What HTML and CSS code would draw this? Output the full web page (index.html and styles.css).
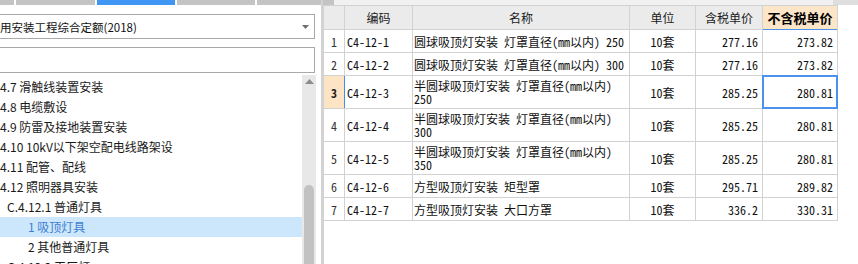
FILE: index.html
```
<!DOCTYPE html>
<html lang="zh">
<head>
<meta charset="utf-8">
<link rel="stylesheet" href="styles.css">
</head>
<body>
<div class="app">
  <div class="left">
    <div class="tabs">
      <span class="tab w14"></span>
      <span class="tab w79"></span>
      <span class="tab w78 active"></span>
      <span class="tab w78"></span>
      <span class="tab grow"></span>
    </div>
    <div class="combo">
      <span class="combo-text">用安装工程综合定额(2018)</span>
      <svg class="combo-arrow" width="7" height="4" viewBox="0 0 7 4"><path d="M0 0H7L3.5 4Z" fill="#707070"/></svg>
    </div>
    <div class="search"></div>
    <div class="tree">
      <div class="tree-items">
        <div class="item l2">4.7 滑触线装置安装</div>
        <div class="item l2">4.8 电缆敷设</div>
        <div class="item l2">4.9 防雷及接地装置安装</div>
        <div class="item l2">4.10 10kV以下架空配电线路架设</div>
        <div class="item l2">4.11 配管、配线</div>
        <div class="item l2">4.12 照明器具安装</div>
        <div class="item l3">C.4.12.1 普通灯具</div>
        <div class="item l4 selected">1 吸顶灯具</div>
        <div class="item l4">2 其他普通灯具</div>
        <div class="item l3">C.4.12.2 工厂灯</div>
      </div>
      <div class="vscroll">
        <div class="vs-up"><svg width="9" height="5" viewBox="0 0 9 5"><path d="M0 5L4.5 0L9 5Z" fill="#8c8c8c"/></svg></div>
        <div class="thumb"></div>
      </div>
    </div>
  </div>
  <div class="splitter"></div>
  <div class="right">
    <div class="strip"><span class="stub"></span><span class="fill"></span><span class="end"></span></div>
    <div class="body">
      <div class="grid">
        <div class="hd"></div>
        <div class="hd">编码</div>
        <div class="hd">名称</div>
        <div class="hd">单位</div>
        <div class="hd">含税单价</div>
        <div class="hd hd-cur">不含税单价</div>

        <div class="c num">1</div>
        <div class="c code">C4-12-1</div>
        <div class="c name">圆球吸顶灯安装 灯罩直径(mm以内) 250</div>
        <div class="c unit">10套</div>
        <div class="c price">277.16</div>
        <div class="c price">273.82</div>

        <div class="c num">2</div>
        <div class="c code">C4-12-2</div>
        <div class="c name">圆球吸顶灯安装 灯罩直径(mm以内) 300</div>
        <div class="c unit">10套</div>
        <div class="c price">277.16</div>
        <div class="c price">273.82</div>

        <div class="c num num-cur">3</div>
        <div class="c code code-cur">C4-12-3</div>
        <div class="c name">半圆球吸顶灯安装 灯罩直径(mm以内) 250</div>
        <div class="c unit">10套</div>
        <div class="c price">285.25</div>
        <div class="c price sel">280.81</div>

        <div class="c num">4</div>
        <div class="c code">C4-12-4</div>
        <div class="c name">半圆球吸顶灯安装 灯罩直径(mm以内) 300</div>
        <div class="c unit">10套</div>
        <div class="c price">285.25</div>
        <div class="c price">280.81</div>

        <div class="c num">5</div>
        <div class="c code">C4-12-5</div>
        <div class="c name">半圆球吸顶灯安装 灯罩直径(mm以内) 350</div>
        <div class="c unit">10套</div>
        <div class="c price">285.25</div>
        <div class="c price">280.81</div>

        <div class="c num">6</div>
        <div class="c code">C4-12-6</div>
        <div class="c name">方型吸顶灯安装 矩型罩</div>
        <div class="c unit">10套</div>
        <div class="c price">295.71</div>
        <div class="c price">289.82</div>

        <div class="c num">7</div>
        <div class="c code">C4-12-7</div>
        <div class="c name">方型吸顶灯安装 大口方罩</div>
        <div class="c unit">10套</div>
        <div class="c price">336.2</div>
        <div class="c price">330.31</div>
      </div>
    </div>
  </div>
</div>
</body>
</html>
```
FILE: styles.css
```
html, body {
  margin: 0;
  padding: 0;
  background: #ffffff;
}
body {
  width: 858px;
  height: 264px;
  overflow: hidden;
  font-family: "Noto Sans CJK SC", "Noto Sans", sans-serif;
  color: #1a1a1a;
}
.app {
  display: flex;
  height: 264px;
}
.left {
  width: 321px;
  flex: none;
  overflow: hidden;
  display: flex;
  flex-direction: column;
}
.tabs {
  display: flex;
  gap: 2px;
  height: 5px;
  flex: none;
}
.tab { background: #c4c4c4; height: 5px; }
.tab.active { background: #4096f3; }
.w14 { width: 14px; }
.w79 { width: 79px; }
.w78 { width: 78px; }
.grow { flex: 1; }

.combo {
  margin: 9px 6px 0 -30px;
  height: 25px;
  box-sizing: border-box;
  border: 1px solid #a9a9a9;
  display: flex;
  align-items: center;
  padding-left: 29px;
  padding-right: 5px;
  flex: none;
}
.combo-text {
  flex: 1;
  font-size: 11.5px;
  white-space: nowrap;
  color: #111;
}
.combo-arrow { flex: none; }

.search {
  margin: 8px 6px 0 -30px;
  height: 26px;
  box-sizing: border-box;
  border: 1px solid #a9a9a9;
  flex: none;
}
.tree {
  margin-top: 2px;
  flex: 1;
  display: flex;
  min-height: 0;
}
.tree-items {
  flex: 1;
  padding-top: 2px;
  overflow: hidden;
}
.item {
  height: 20px;
  line-height: 20px;
  font-size: 12px;
  white-space: nowrap;
  color: #1a1a1a;
}
.l2 { padding-left: 0; }
.l3 { padding-left: 7px; }
.l4 { padding-left: 28px; }
.item.selected {
  background: #cce7fc;
  color: #3f7fd0;
}
.vscroll {
  width: 14px;
  margin-right: 5px;
  background: #e8e8e8;
  display: flex;
  flex-direction: column;
  align-items: center;
  flex: none;
}
.vs-up {
  height: 12px;
  display: flex;
  align-items: center;
  justify-content: center;
}
.thumb {
  margin-top: 98px;
  width: 10px;
  flex: 1;
  background: #c2c2c2;
  border-radius: 5px 5px 0 0;
}

.splitter {
  width: 2px;
  flex: none;
  background: #d3d3d3;
}
.right {
  flex: 1;
  display: flex;
  flex-direction: column;
  min-width: 0;
}
.strip {
  height: 5px;
  display: flex;
  flex: none;
}
.stub { width: 11px; background: #c4c4c4; }
.fill { flex: 1; background: #f1f1f1; }
.end { width: 25px; background: #dedede; }
.body {
  flex: 1;
  border-left: 1px solid #d2d2d2;
}
.grid {
  display: grid;
  grid-template-columns: 20px 67px 216px 65px 66px 74px;
  grid-template-rows: 23px 22px 22px 32px 32px 32px 22px 22px;
  gap: 1px;
  padding: 1px 1px 1px 0;
  background: #d2d2d2;
  width: max-content;
  font-family: "Noto Sans Mono CJK SC", "Noto Sans CJK SC", monospace;
  font-size: 12px;
  color: #111;
}
.hd {
  background: #ebebeb;
  display: flex;
  align-items: center;
  justify-content: center;
  font-family: "Noto Sans CJK SC", sans-serif;
  font-size: 12px;
  color: #1a1a1a;
}
.hd-cur {
  background: #fde5c8;
  font-weight: bold;
  font-size: 13px;
  color: #000;
  box-shadow: 0 1px 0 #4a92ea;
}
.c {
  background: #ffffff;
  display: flex;
  align-items: center;
  line-height: 13px;
}
.num { justify-content: center; color: #333; }
.num-cur { background: #fde4c4; font-weight: bold; color: #222; }
.code { padding-left: 2px; }
.code-cur { box-shadow: -1px 0 0 #3c8eef; }
.name { padding-left: 1px; }
.unit { justify-content: center; }
.price { justify-content: flex-end; padding-right: 4px; }
.sel {
  outline: 2px solid #4a92ea;
  outline-offset: -1px;
}
```
